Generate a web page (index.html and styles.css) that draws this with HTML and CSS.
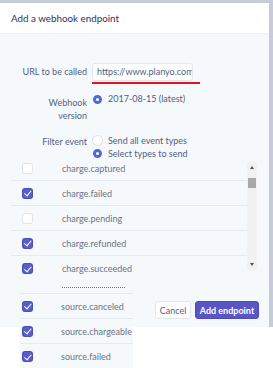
FILE: index.html
```html
<!DOCTYPE html>
<html>
<head>
<meta charset="utf-8">
<link rel="stylesheet" href="styles.css">
</head>
<body>
<div class="backdrop">
  <div class="modal">
    <div class="modal-header">Add a webhook endpoint</div>
    <div class="modal-body">
      <div class="form-row url-row">
        <label class="label">URL to be called</label>
        <div class="control">
          <div class="input">https://www.planyo.com</div>
          <div class="spell-line"></div>
        </div>
      </div>
      <div class="form-row version-row">
        <div class="label two-line">Webhook<br>version</div>
        <div class="control">
          <div class="radio-line"><span class="radio on"></span>2017-08-15 (latest)</div>
        </div>
      </div>
      <div class="form-row filter-row">
        <div class="label filter-label">Filter event</div>
        <div class="control">
          <div class="radio-line tall"><span class="radio"></span>Send all event types</div>
          <div class="radio-line tall"><span class="radio on"></span>Select types to send</div>
        </div>
      </div>
      <div class="event-list">
        <div class="rows">
          <div class="row"><span class="check"></span><span class="name">charge.captured</span></div>
          <div class="row"><span class="check on"></span><span class="name">charge.failed</span></div>
          <div class="row"><span class="check"></span><span class="name">charge.pending</span></div>
          <div class="row"><span class="check on"></span><span class="name">charge.refunded</span></div>
          <div class="row last"><span class="check on"></span><span class="name">charge.succeeded</span></div>
          <div class="dotted"></div>
        </div>
        <div class="scrollbar">
          <span class="arrow up"></span>
          <span class="thumb"></span>
          <span class="arrow down"></span>
        </div>
      </div>
    </div>
    <div class="modal-footer">
      <button class="btn btn-cancel">Cancel</button>
      <button class="btn btn-primary">Add endpoint</button>
    </div>
  </div>
</div>
<div class="overflow-list">
  <div class="orow"><span class="check on"></span><span class="name">source.canceled</span></div>
  <div class="orow"><span class="check on"></span><span class="name">source.chargeable</span></div>
  <div class="orow"><span class="check on"></span><span class="name">source.failed</span></div>
</div>
</body>
</html>
```
FILE: styles.css
```css
* { box-sizing: border-box; }
html, body { margin: 0; padding: 0; }
body {
  background: #ffffff;
  font-family: Lato, "Open Sans", sans-serif;
  width: 273px;
  height: 368px;
  overflow: hidden;
  position: relative;
}
.backdrop {
  background: #c7cbd7;
  height: 327px;
  padding: 3px 4px 0 0;
}
.modal {
  width: 269px;
  height: 324px;
  display: flex;
  flex-direction: column;
  background: #f6f9fc;
}
.modal-header {
  height: 31px;
  background: #ffffff;
  color: #32325d;
  font-size: 9.8px;
  display: flex;
  align-items: center;
  padding-left: 11px;
  border-bottom: 1px solid #eef1f5;
}
.modal-body {
  height: 259px;
  padding: 29px 12px 0 11px;
  color: #525f7f;
  font-size: 9px;
}
.form-row {
  display: grid;
  grid-template-columns: 76px 1fr;
  column-gap: 5px;
}
.label { text-align: right; }
.url-row { align-items: start; }
.url-row .label { line-height: 18px; }
.input {
  width: 101px;
  height: 18px;
  background: #fff;
  border: 1px solid #e3e7ee;
  border-radius: 3px;
  padding-left: 4px;
  line-height: 16px;
  font-size: 9px;
  color: #525f7f;
  white-space: nowrap;
  overflow: hidden;
}
.spell-line {
  width: 108px;
  height: 2px;
  background: #e8121d;
  margin-top: 1px;
}
.version-row { margin-top: 9px; }
.two-line { padding-top: 2.5px; line-height: 13.3px; }
.radio-line {
  display: flex;
  align-items: center;
  height: 12px;
  line-height: 12px;
  white-space: nowrap;
}
.radio-line.tall { height: 12.7px; }
.radio {
  width: 9px;
  height: 9px;
  border-radius: 50%;
  background: #fff;
  box-shadow: 0 0 0 1px #dde2ea;
  margin: 0 6px 0 1px;
  flex: none;
}
.radio.on {
  background: #fff;
  box-shadow: none;
  border: 3px solid #5469d4;
}
.filter-row { margin-top: 12.4px; }
.filter-label { padding-top: 2px; line-height: 12.7px; }
.event-list {
  display: flex;
  margin-top: -3.8px;
}
.rows { flex: 1; }
.row {
  height: 25px;
  border-bottom: 1px solid #e6ebf1;
  display: flex;
  align-items: center;
  padding-left: 12px;
  color: #6b7385;
}
.row.last { border-bottom: none; }
.check {
  width: 9px;
  height: 9px;
  border-radius: 2px;
  background: #fff;
  box-shadow: 0 0 0 1px #e1e5ec, 0 1px 1px rgba(0,0,0,0.08);
  flex: none;
  margin-right: 30px;
  position: relative;
}
.check.on {
  background: #5b5dc8;
  box-shadow: 0 0 0 1px #4b4db8;
}
.check.on::after {
  content: "";
  position: absolute;
  left: 2.5px;
  top: 0.5px;
  width: 3px;
  height: 5.5px;
  border: solid #fff;
  border-width: 0 1.5px 1.5px 0;
  transform: rotate(40deg);
}
.dotted {
  width: 63px;
  margin: 6px 0 0 51px;
  border-top: 1px dotted #6b6b8a;
}
.scrollbar {
  width: 10px;
  height: 108px;
  margin-top: 6px;
  background: #f1f1f1;
  display: flex;
  flex-direction: column;
  align-items: center;
}
.arrow {
  width: 0; height: 0;
  border-left: 2.5px solid transparent;
  border-right: 2.5px solid transparent;
}
.arrow.up { border-bottom: 3px solid #505050; margin-top: 4px; }
.thumb {
  width: 8px;
  height: 10px;
  background: #a8a8a8;
  margin-top: 9px;
}
.arrow.down { border-top: 3px solid #505050; margin-top: auto; margin-bottom: 4px; }
.modal-footer {
  height: 34px;
  display: flex;
  justify-content: flex-end;
  align-items: center;
  gap: 4px;
  padding-right: 10px;
}
.btn {
  height: 18px;
  border-radius: 3px;
  font-family: Lato, sans-serif;
  font-size: 9px;
  padding: 0;
  display: flex;
  align-items: center;
  justify-content: center;
}
.btn-cancel {
  width: 36px;
  background: #fff;
  color: #525f7f;
  border: 1px solid #e3e7ee;
}
.btn-primary {
  width: 64px;
  background: #5a55c4;
  color: #fff;
  border: 1px solid #4f4ab8;
  font-weight: 700;
}
.overflow-list {
  position: absolute;
  left: 20px;
  top: 293px;
  width: 113px;
  background: #f6f9fc;
  border-top: 1px solid #e6ebf1;
}
.orow {
  height: 25px;
  border-bottom: 1px solid #e6ebf1;
  display: flex;
  align-items: center;
  padding-left: 3px;
  color: #6b7385;
  font-size: 9px;
}
.orow:last-child { border-bottom: none; }
.orow .check { margin-right: 29px; }
```
